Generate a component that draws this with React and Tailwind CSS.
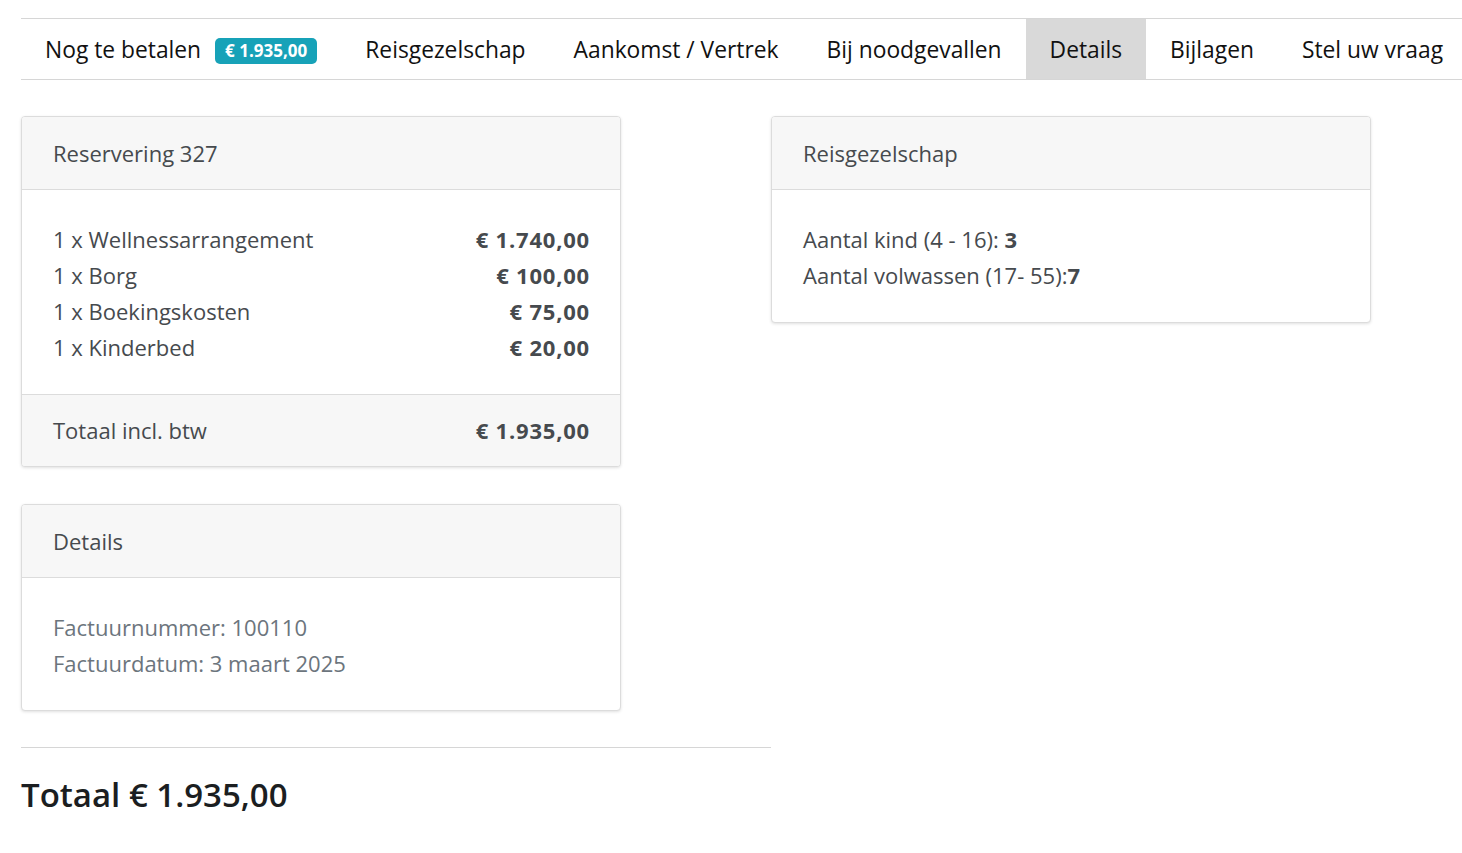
import React from 'react';

const tabs = [
  { label: 'Nog te betalen', badge: '€ 1.935,00' },
  { label: 'Reisgezelschap' },
  { label: 'Aankomst / Vertrek' },
  { label: 'Bij noodgevallen' },
  { label: 'Details', active: true },
  { label: 'Bijlagen' },
  { label: 'Stel uw vraag' },
];

const items = [
  { name: '1 x Wellnessarrangement', price: '€ 1.740,00' },
  { name: '1 x Borg', price: '€ 100,00' },
  { name: '1 x Boekingskosten', price: '€ 75,00' },
  { name: '1 x Kinderbed', price: '€ 20,00' },
];

function Card({ title, children, footer }) {
  return (
    <div className="w-[600px] rounded-[4px] border border-[#dcdcdc] bg-white shadow-[0_1px_3px_rgba(0,0,0,0.12)] overflow-hidden">
      <div className="h-[73px] flex items-center px-[31px] bg-[#f7f7f7] border-b border-[#dcdcdc] text-[22px] text-[#464a4e]">
        {title}
      </div>
      <div className="pl-[31px] pr-[30px] pt-[31px] pb-[29px] text-[22px] leading-[36px]">{children}</div>
      {footer && (
        <div className="h-[72px] flex items-center justify-between pl-[31px] pr-[30px] bg-[#f7f7f7] border-t border-[#dcdcdc] text-[22px] text-[#464a4e]">
          {footer}
        </div>
      )}
    </div>
  );
}

export default function App() {
  return (
    <div className="min-h-screen bg-white pt-[18px] pl-[21px] font-['Open_Sans',sans-serif] text-[#464a4e]">
      {/* Tabs */}
      <nav className="flex h-[62px] border-y border-[#d6d6d6] overflow-hidden">
        {tabs.map((t) => (
          <div
            key={t.label}
            className={`flex shrink-0 items-center whitespace-nowrap px-[24px] pt-[3px] text-[22.8px] text-[#111] ${t.active ? 'bg-[#d9d9d9]' : ''}`}
          >
            {t.label}
            {t.badge && (
              <span className="ml-[14px] rounded-[5px] bg-[#17a2b8] px-[10px] h-[26px] flex items-center whitespace-nowrap text-[17px] font-bold text-white">
                {t.badge}
              </span>
            )}
          </div>
        ))}
      </nav>

      <div className="flex mt-[36px]">
        <div className="w-[750px] flex flex-col">
          <Card
            title="Reservering 327"
            footer={
              <>
                <span>Totaal incl. btw</span>
                <span className="font-bold tracking-[0.8px]">€ 1.935,00</span>
              </>
            }
          >
            {items.map((i) => (
              <div key={i.name} className="flex justify-between">
                <span>{i.name}</span>
                <span className="font-bold tracking-[0.8px]">{i.price}</span>
              </div>
            ))}
          </Card>
          <div className="mt-[37px]">
            <Card title="Details">
              <div className="text-[#6c757d]">
                <div>Factuurnummer: 100110</div>
                <div>Factuurdatum: 3 maart 2025</div>
              </div>
            </Card>
          </div>
          <hr className="mt-[36px] border-t border-[#d6d6d6]" />
          <h2 className="mt-[26px] text-[33px] font-semibold text-[#1b1e21] leading-tight">Totaal € 1.935,00</h2>
        </div>
        <div>
          <Card title="Reisgezelschap">
            <div>
              Aantal kind (4 - 16): <b>3</b>
            </div>
            <div>
              Aantal volwassen (17- 55):<b>7</b>
            </div>
          </Card>
        </div>
      </div>
    </div>
  );
}
